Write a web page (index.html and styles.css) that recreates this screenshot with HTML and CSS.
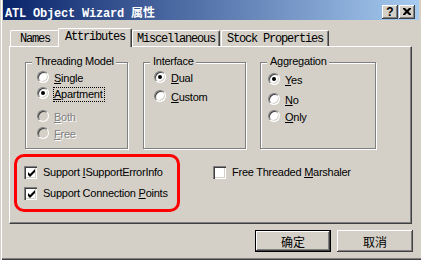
FILE: index.html
```html
<!DOCTYPE html>
<html>
<head>
<meta charset="utf-8">
<link rel="stylesheet" href="styles.css">
</head>
<body>
<div class="window">
  <div class="titlebar">
    <span class="title">ATL Object Wizard <span class="cjk">属性</span></span>
    <div class="caption-btns">
      <span class="cbtn help">?</span>
      <span class="cbtn close"><svg width="8" height="7" viewBox="0 0 8 7"><path d="M0 0h2l2 2 2-2h2v1l-2.5 2.5L8 6v1H6L4 5 2 7H0V6l2.5-2.5L0 1z" fill="#000"/></svg></span>
    </div>
  </div>
  <div class="tabs">
    <div class="tab t-names">Names</div>
    <div class="tab t-attr selected">Attributes</div>
    <div class="tab t-misc">Miscellaneous</div>
    <div class="tab t-stock">Stock Properties</div>
  </div>
  <div class="panel">
    <div class="groups">
      <div class="group g-thread">
        <span class="legend">Threading Model</span>
        <div class="opt"><span class="radio"></span><span class="lbl"><u>S</u>ingle</span></div>
        <div class="opt sp-a"><span class="radio on"></span><span class="lbl focus"><u>A</u>partment</span></div>
        <div class="opt sp-b disabled"><span class="radio"></span><span class="lbl"><u>B</u>oth</span></div>
        <div class="opt sp-c disabled"><span class="radio"></span><span class="lbl"><u>F</u>ree</span></div>
      </div>
      <div class="group g-iface">
        <span class="legend">Interface</span>
        <div class="opt"><span class="radio on"></span><span class="lbl"><u>D</u>ual</span></div>
        <div class="opt sp-f"><span class="radio"></span><span class="lbl"><u>C</u>ustom</span></div>
      </div>
      <div class="group g-aggr">
        <span class="legend">Aggregation</span>
        <div class="opt"><span class="radio on"></span><span class="lbl"><u>Y</u>es</span></div>
        <div class="opt sp-d"><span class="radio"></span><span class="lbl"><u>N</u>o</span></div>
        <div class="opt sp-e"><span class="radio"></span><span class="lbl"><u>O</u>nly</span></div>
      </div>
    </div>
    <div class="checks">
      <div class="check-col c1">
        <div class="chk"><span class="box"><svg width="9" height="9" viewBox="0 0 9 9"><path d="M1 3v3l2 2 5-5V0L3 5z" fill="#000"/></svg></span><span class="lbl">Support <u>I</u>SupportErrorInfo</span></div>
        <div class="chk"><span class="box"><svg width="9" height="9" viewBox="0 0 9 9"><path d="M1 3v3l2 2 5-5V0L3 5z" fill="#000"/></svg></span><span class="lbl">Support Connection <u>P</u>oints</span></div>
      </div>
      <div class="check-col c2">
        <div class="chk"><span class="box"></span><span class="lbl">Free Threaded <u>M</u>arshaler</span></div>
      </div>
    </div>
    <div class="annotation"></div>
  </div>
  <div class="actions">
    <button class="btn default">确定</button>
    <button class="btn">取消</button>
  </div>
</div>
</body>
</html>
```

FILE: styles.css
```css
* { box-sizing: border-box; }
html, body { margin: 0; padding: 0; }
body {
  width: 421px; height: 260px; overflow: hidden;
  background: #d4d0c8;
  font-family: "Liberation Sans", Arial, sans-serif;
  font-size: 11px; letter-spacing: -0.25px; color: #000;
}
.window {
  width: 421px; height: 260px;
  padding: 0 2px 2px 3px;
  display: flex; flex-direction: column;
  box-shadow: inset 1px 0 0 #d4d0c8, inset 2px 0 0 #fff, inset 0 -1px 0 #404040, inset 0 -2px 0 #808080;
}
.titlebar {
  height: 20px; flex: none;
  display: flex; justify-content: space-between; align-items: flex-start;
  background: linear-gradient(to right, #0a246a, #a6caf0);
  color: #fff;
  padding: 0 4px 0 2px;
}
.title {
  font-family: "Liberation Mono", monospace; font-weight: bold;
  font-size: 12px; line-height: 14px; letter-spacing: -0.2px;
  padding-top: 5px; white-space: pre;
}
.title .cjk { font-family: "Noto Sans CJK SC", sans-serif; letter-spacing: 0; }
.caption-btns { display: flex; gap: 1px; padding-top: 5px; }
.cbtn {
  width: 16px; height: 14px;
  background: #d4d0c8; color: #000;
  box-shadow: inset -1px -1px 0 #404040, inset 1px 1px 0 #fff, inset -2px -2px 0 #808080;
  display: flex; align-items: center; justify-content: center;
}
.help { font-family: "Liberation Sans", sans-serif; font-weight: bold; font-size: 12px; line-height: 12px; letter-spacing: 0; padding-bottom: 1px; }
.close svg { display: block; margin-bottom: 1px; }

.tabs {
  display: flex; align-items: flex-end;
  height: 26px; flex: none;
  padding-left: 7px;
  position: relative; z-index: 1;
}
.tab {
  height: 16px;
  border: 1px solid; border-bottom: none;
  border-color: #fff #404040 #fff #fff;
  border-radius: 2px 2px 0 0;
  box-shadow: inset -1px 0 0 #808080;
  background: #d4d0c8;
  font-family: "Liberation Mono", monospace; font-size: 12px; letter-spacing: -1.2px;
  line-height: 14px; padding-top: 1px; text-align: center;
}
.t-names { width: 50px; }
.t-attr { width: 74px; }
.t-misc { width: 88px; margin-left: 2px; }
.t-stock { width: 108px; margin-left: 1px; }
.tab.selected { height: 19px; margin: 0 -2px -1px -2px; position: relative; z-index: 2; }

.panel {
  width: 403px; height: 178px; flex: none;
  margin-left: 6px;
  border: 1px solid; border-color: #fff #404040 #404040 #fff;
  box-shadow: inset -1px -1px 0 #808080;
  padding: 15px 0 0 14px;
  position: relative;
}
.groups { display: flex; margin-left: 1px; }
.group {
  height: 87px;
  border: 1px solid #808080;
  box-shadow: inset 1px 1px 0 #fff, 1px 1px 0 #fff;
  position: relative;
  display: flex; flex-direction: column;
  padding-top: 8px;
}
.g-thread { width: 103px; margin-right: 15px; padding-left: 11px; }
.g-iface { width: 103px; margin-right: 14px; padding-left: 10px; }
.g-aggr { width: 116px; padding-left: 7px; padding-top: 10px; }
.legend {
  position: absolute; top: -8px; left: 6px;
  background: #d4d0c8; padding: 0 2px 0 3px;
  line-height: 13px; white-space: nowrap;
}
.opt { display: flex; align-items: flex-start; height: 15px; }
.sp-a { margin-top: 1px; }
.sp-b { margin-top: 8px; }
.sp-c { margin-top: 2px; }
.sp-d { margin-top: 5px; }
.sp-e { margin-top: 2px; }
.sp-f { margin-top: 4px; }
.radio {
  width: 12px; height: 12px; flex: none;
  border-radius: 50%;
  background: #fff;
  border: 1px solid; border-color: #808080 #fff #fff #808080;
  box-shadow: inset 1px 1px 0 #404040, inset -1px -1px 0 #d4d0c8;
  position: relative;
}
.radio.on::after {
  content: ""; position: absolute; left: 3px; top: 3px;
  width: 4px; height: 4px; border-radius: 50%; background: #000;
}
.lbl {
  border: 1px solid transparent;
  line-height: 13px; white-space: nowrap;
  margin-left: 4px; padding-right: 1px;
}
.lbl.focus { border: 1px dotted #000; }
.disabled .radio { background: #d4d0c8; }
.disabled .lbl { color: #808080; text-shadow: 1px 1px 0 #fff; }

.checks { display: flex; margin-top: 17px; }
.check-col { display: flex; flex-direction: column; gap: 8px; }
.c1 { width: 189px; }
.chk { display: flex; align-items: flex-start; height: 13px; }
.box {
  width: 13px; height: 13px; flex: none;
  background: #fff;
  box-shadow: inset 1px 1px 0 #808080, inset 2px 2px 0 #404040, inset -1px -1px 0 #fff, inset -2px -2px 0 #d4d0c8;
  display: flex; align-items: center; justify-content: center;
  padding: 1px 0 0 1px;
}
.box svg { display: block; }
.chk .lbl { margin-left: 5px; line-height: 11px; }

.annotation {
  position: absolute; left: 4px; top: 107px;
  width: 166px; height: 58px;
  border: 3px solid #ff0000; border-radius: 10px;
}

.actions {
  display: flex; justify-content: flex-end; gap: 6px;
  margin-top: 6px; padding-right: 6px;
}
.btn {
  width: 76px; height: 22px;
  background: #d4d0c8; border: none; padding: 0; margin: 0;
  font-family: "Noto Sans CJK SC", sans-serif; font-size: 12px; letter-spacing: 0;
  color: #000;
  box-shadow: inset -1px -1px 0 #404040, inset 1px 1px 0 #fff, inset -2px -2px 0 #808080;
}
.btn.default {
  box-shadow: inset 0 0 0 1px #000, inset -2px -2px 0 #404040, inset 2px 2px 0 #fff, inset -3px -3px 0 #808080;
}
```
